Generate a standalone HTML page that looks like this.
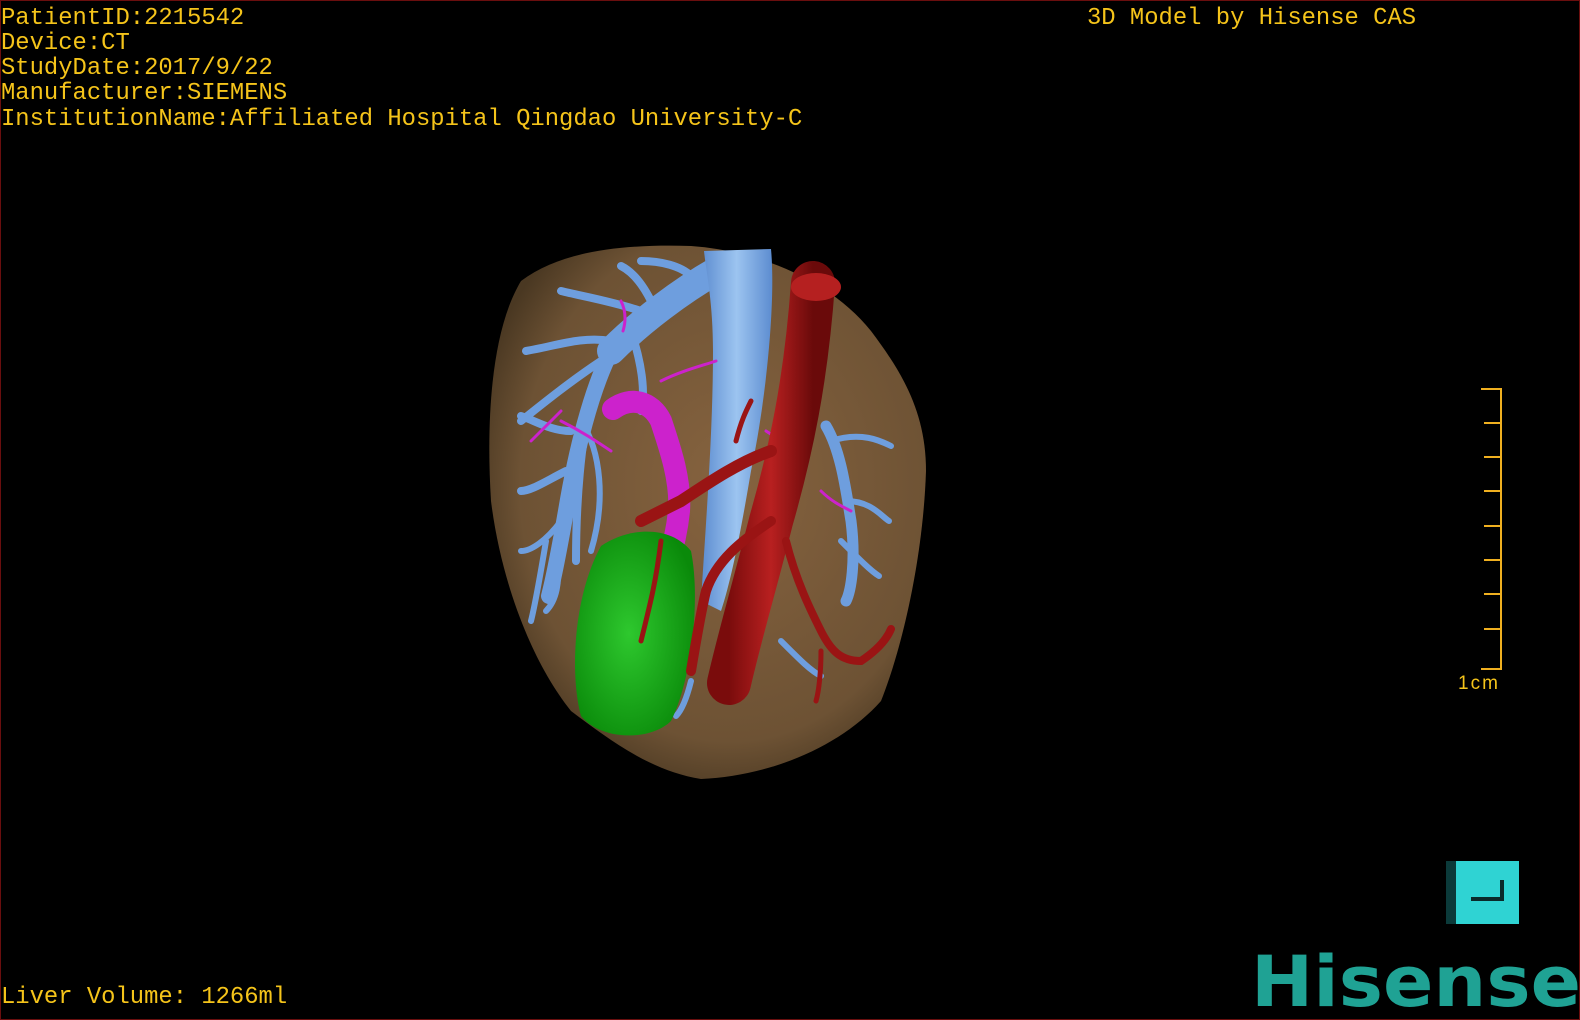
<!DOCTYPE html>
<html><head><meta charset="utf-8"><style>
html,body{margin:0;padding:0;background:#000;}
#f{position:relative;width:1580px;height:1020px;background:#000;overflow:hidden;box-sizing:border-box;border:1px solid #6a0e0e;}
.t{position:absolute;left:0;font-family:"Liberation Mono",monospace;font-size:23.85px;color:#f5c41a;line-height:25px;white-space:pre;}
</style></head><body><div id="f">
<div class="t" style="top:5px">PatientID:2215542</div>
<div class="t" style="top:30px">Device:CT</div>
<div class="t" style="top:55px">StudyDate:2017/9/22</div>
<div class="t" style="top:80px">Manufacturer:SIEMENS</div>
<div class="t" style="top:106px">InstitutionName:Affiliated Hospital Qingdao University-C</div>
<div class="t" style="top:5px;left:1086px">3D Model by Hisense CAS</div>
<div class="t" style="top:984px">Liver Volume: 1266ml</div>
<svg width="1580" height="1020" style="position:absolute;left:0;top:0">
<defs>
<radialGradient id="lv" cx="0.55" cy="0.45" r="0.6"><stop offset="0" stop-color="#86633f"/><stop offset="0.8" stop-color="#6d5234"/><stop offset="1" stop-color="#4a3822"/></radialGradient>
<linearGradient id="ao" x1="0" x2="1"><stop offset="0" stop-color="#7a0c0c"/><stop offset="0.5" stop-color="#b82020"/><stop offset="1" stop-color="#6a0a0a"/></linearGradient>
<linearGradient id="iv" x1="0" x2="1"><stop offset="0" stop-color="#5c8cd0"/><stop offset="0.5" stop-color="#9cc4f0"/><stop offset="1" stop-color="#5c8cd0"/></linearGradient>
<radialGradient id="gb" cx="0.45" cy="0.5" r="0.6"><stop offset="0" stop-color="#2ec82e"/><stop offset="1" stop-color="#0a8a0a"/></radialGradient>
</defs>
<path d="M520,280 C560,250 620,243 690,245 C760,250 830,280 870,330 C900,370 925,410 925,470 C922,560 900,650 880,700 C840,745 770,775 700,778 C650,770 610,740 570,710 C530,660 500,580 490,500 C485,420 490,330 520,280 Z" fill="url(#lv)"/>
<g stroke="#6e9ede" stroke-linecap="round" fill="none">
<path d="M715,270 C680,290 640,320 610,350" stroke-width="28"/>
<path d="M610,350 C590,390 575,450 565,510 C558,550 552,580 548,595" stroke-width="16"/>
<path d="M600,360 C570,380 545,400 520,420 M610,340 C580,335 555,345 525,350 M640,310 C610,300 580,295 560,290 M650,300 C640,280 630,270 620,265 M690,275 C680,265 660,260 640,260 M590,400 C580,440 575,500 575,560 M565,470 C545,480 530,490 520,490 M570,430 C550,430 535,420 520,415 M630,330 C640,360 645,390 640,410" stroke-width="8"/>
<path d="M580,420 C600,450 605,500 590,550 M560,520 C545,540 530,550 520,550 M555,560 C560,580 555,600 545,610 M545,540 C540,570 535,600 530,620" stroke-width="6"/>
<path d="M825,425 C840,450 845,490 850,520 C855,560 850,590 845,600" stroke-width="11"/>
<path d="M830,440 C860,430 880,440 890,445 M845,500 C870,500 880,515 888,520 M840,540 C860,560 870,570 878,575 M780,640 C800,660 810,670 820,675 M690,680 C685,700 680,710 675,715" stroke-width="6"/>
</g>
<path d="M703,250 L770,248 C775,300 765,400 750,470 C740,530 730,580 720,610 L700,600 C705,520 712,430 712,350 C712,300 705,270 703,250 Z" fill="url(#iv)"/>
<g stroke="#cc22cc" stroke-linecap="round" fill="none">
<path d="M612,408 C630,395 650,400 660,420 C670,450 680,480 678,510 C676,530 672,545 668,560" stroke-width="22"/>
<path d="M660,380 C680,370 700,365 715,360 M620,300 C625,310 625,320 622,330 M560,420 C580,430 595,440 610,450 M560,410 C550,420 540,430 530,440 M820,490 C830,500 840,505 850,510 M765,430 C780,440 790,445 800,450" stroke-width="3"/>
</g>
<path d="M600,545 C630,525 670,525 690,550 C700,600 690,680 670,720 C650,740 600,740 580,715 C570,680 570,600 600,545 Z" fill="url(#gb)"/>
<g stroke="#9a1414" stroke-linecap="round" fill="none">
<path d="M812,282 C805,380 790,450 770,520 C755,580 740,630 728,682" stroke-width="44" stroke="url(#ao)"/>
<path d="M770,450 C740,460 710,480 680,500 C660,510 650,515 640,520" stroke-width="12"/>
<path d="M770,520 C740,540 715,560 705,590 C700,610 695,640 690,670" stroke-width="10"/>
<path d="M785,540 C795,580 810,610 820,630 C830,650 840,660 860,660 C875,650 885,640 890,628" stroke-width="8"/>
<path d="M820,650 C820,670 818,690 815,700 M735,440 C740,420 745,410 750,400 M660,540 C655,580 650,600 640,640" stroke-width="5"/>
</g>
<ellipse cx="815" cy="286" rx="25" ry="14" fill="#b52020"/>
<g stroke="#f0b020" stroke-width="2" fill="none">
<path d="M1480,388 H1500 V668 H1480"/>
<path d="M1483,422 H1500 M1483,456 H1500 M1483,490 H1500 M1483,525 H1500 M1483,559 H1500 M1483,593 H1500 M1483,628 H1500"/>
</g>
<text x="1457" y="688" font-family="Liberation Sans,sans-serif" font-size="19" fill="#f5c41a" letter-spacing="2">1cm</text>
<rect x="1445" y="860" width="12" height="63" fill="#0b3a3a"/>
<rect x="1455" y="860" width="63" height="63" fill="#2fd3d3"/>
<path d="M1501,879 V898 H1470" stroke="#0a2a2a" stroke-width="4" fill="none"/>
<text x="1250" y="1005" font-family="DejaVu Sans,sans-serif" font-weight="bold" font-size="70" fill="#1fa294" textLength="330" lengthAdjust="spacingAndGlyphs">Hisense</text>
</svg>
</div></body></html>
